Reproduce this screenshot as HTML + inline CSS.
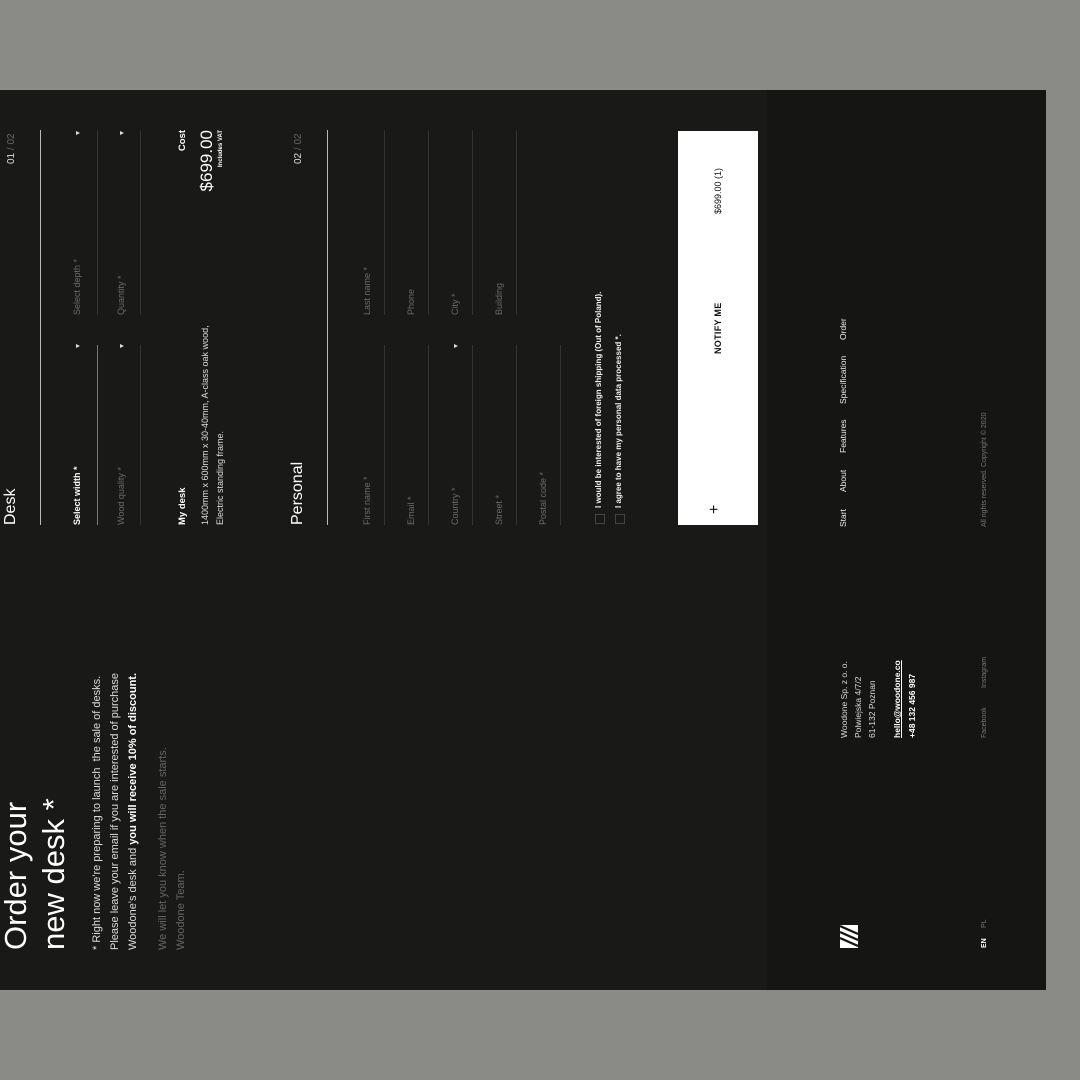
<!DOCTYPE html>
<html><head><meta charset="utf-8"><style>
html,body{margin:0;padding:0;width:1080px;height:1080px;background:#8a8a86;overflow:hidden}
#p{position:absolute;left:0;top:990px;width:900px;height:1046px;transform-origin:0 0;transform:rotate(-90deg);background:#191917;font-family:"Liberation Sans",sans-serif;color:#eee}
#p div{position:absolute;white-space:nowrap}
.foot{left:0;top:767px;width:900px;height:279px;background:#151514}
.lbl{font-size:9px;color:#6a6a66}
.ln{height:1px;background:#333331}
.arr{width:0;height:0;border-left:2.5px solid transparent;border-right:2.5px solid transparent;border-top:4px solid #ddd}
.nav{font-size:8.5px;color:#eee;top:838px}
.sm{font-size:7px;color:#777;top:981px}
</style></head><body>
<div id="p">
<div class="foot"></div>
<div style="left:40px;top:-3px;font-size:31px;line-height:38px;color:#fff">Order your<br>new desk *</div>
<div style="left:40px;top:88px;font-size:11px;line-height:18px;color:#ddd">* Right now we're preparing to launch &nbsp;the sale of desks.<br>Please leave your email if you are interested of purchase<br>Woodone's desk and <b style="color:#fff">you will receive 10% of discount.</b></div>
<div style="left:40px;top:154px;font-size:11px;line-height:18px;color:#666">We will let you know when the sale starts.<br>Woodone Team.</div>

<div style="left:465px;top:2px;font-size:16px;color:#fff">Desk</div>
<div style="left:826px;top:6px;font-size:10px;color:#ddd">01 <span style="color:#666">/ 02</span></div>
<div style="left:465px;top:40px;width:395px;height:1px;background:#bbb"></div>

<div style="left:465px;top:72px;font-size:9px;color:#fff;font-weight:bold">Select width *</div>
<div class="arr" style="left:642px;top:76px"></div>
<div style="left:465px;top:97px;width:180px;height:1px;background:#777"></div>
<div class="lbl" style="left:675px;top:72px">Select depth *</div>
<div class="arr" style="left:855px;top:76px"></div>
<div class="ln" style="left:675px;top:97px;width:185px"></div>
<div class="lbl" style="left:465px;top:116px">Wood quality *</div>
<div class="arr" style="left:642px;top:120px"></div>
<div class="ln" style="left:465px;top:140px;width:180px"></div>
<div class="lbl" style="left:675px;top:116px">Quantity *</div>
<div class="arr" style="left:855px;top:120px"></div>
<div class="ln" style="left:675px;top:140px;width:185px"></div>

<div style="left:465px;top:177px;font-size:9.5px;font-weight:bold;color:#fff">My desk</div>
<div style="left:465px;top:198px;font-size:9px;line-height:15px;color:#ddd">1400mm x 600mm x 30-40mm, A-class oak wood,<br>Electric standing frame.</div>
<div style="left:800px;width:60px;text-align:right;top:177px;font-size:9.5px;font-weight:bold;color:#fff">Cost</div>
<div style="left:760px;width:100px;text-align:right;top:197px;font-size:17px;color:#fff">$699.00</div>
<div style="left:780px;width:80px;text-align:right;top:218px;font-size:6px;font-weight:bold;color:#fff">Includes VAT</div>

<div style="left:465px;top:289px;font-size:16px;color:#fff">Personal</div>
<div style="left:826px;top:293px;font-size:10px;color:#ddd">02 <span style="color:#666">/ 02</span></div>
<div style="left:465px;top:327px;width:395px;height:1px;background:#bbb"></div>

<div class="lbl" style="left:465px;top:362px">First name *</div><div class="ln" style="left:465px;top:384px;width:180px"></div>
<div class="lbl" style="left:675px;top:362px">Last name *</div><div class="ln" style="left:675px;top:384px;width:185px"></div>
<div class="lbl" style="left:465px;top:406px">Email *</div><div class="ln" style="left:465px;top:428px;width:180px"></div>
<div class="lbl" style="left:675px;top:406px">Phone</div><div class="ln" style="left:675px;top:428px;width:185px"></div>
<div class="lbl" style="left:465px;top:450px">Country *</div><div class="arr" style="left:642px;top:454px"></div><div class="ln" style="left:465px;top:472px;width:180px"></div>
<div class="lbl" style="left:675px;top:450px">City *</div><div class="ln" style="left:675px;top:472px;width:185px"></div>
<div class="lbl" style="left:465px;top:494px">Street *</div><div class="ln" style="left:465px;top:516px;width:180px"></div>
<div class="lbl" style="left:675px;top:494px">Building</div><div class="ln" style="left:675px;top:516px;width:185px"></div>
<div class="lbl" style="left:465px;top:538px">Postal code *</div><div class="ln" style="left:465px;top:560px;width:180px"></div>

<div style="left:466px;top:595px;width:8px;height:8px;border:1px solid #444"></div>
<div style="left:482px;top:594px;font-size:8px;font-weight:bold;color:#eee">I would be interested of foreign shipping (Out of Poland).</div>
<div style="left:466px;top:615px;width:8px;height:8px;border:1px solid #444"></div>
<div style="left:482px;top:614px;font-size:8px;font-weight:bold;color:#eee">I agree to have my personal data processed *.</div>

<div style="left:465px;top:678px;width:394px;height:80px;background:#fff"></div>
<div style="left:476px;top:706px;font-size:16px;color:#111">+</div>
<div style="left:636px;top:713px;font-size:9px;font-weight:bold;color:#111;letter-spacing:.3px">NOTIFY ME</div>
<div style="left:776px;top:713px;font-size:9px;color:#111">$699.00 (1)</div>

<svg style="position:absolute;left:42px;top:840px" width="23" height="18" viewBox="0 0 23 18"><rect x="0" y="0" width="23" height="18" fill="#fff"/><path d="M2 18L10 0M8 18L16 0M14 18L22 0" stroke="#151514" stroke-width="2.2"/></svg>
<div style="left:252px;top:837px;font-size:8.5px;line-height:14px;color:#ddd">Woodone Sp. z o. o.<br>Polwiejska 4/7/2<br>61-132 Poznan</div>
<div style="left:252px;top:890px;font-size:8.5px;line-height:15px;font-weight:bold;color:#fff"><u>hello@woodone.co</u><br>+48 132 456 987</div>
<div class="nav" style="left:463px">Start</div>
<div class="nav" style="left:498px">About</div>
<div class="nav" style="left:537px">Features</div>
<div class="nav" style="left:586px">Specification</div>
<div class="nav" style="left:650px">Order</div>
<div class="sm" style="left:42px;color:#fff;font-weight:bold">EN</div>
<div class="sm" style="left:62px">PL</div>
<div class="sm" style="left:252px">Facebook</div>
<div class="sm" style="left:302px">Instagram</div>
<div class="sm" style="left:463px">All rights reserved. Copyright © 2020</div>
</div>
</body></html>
